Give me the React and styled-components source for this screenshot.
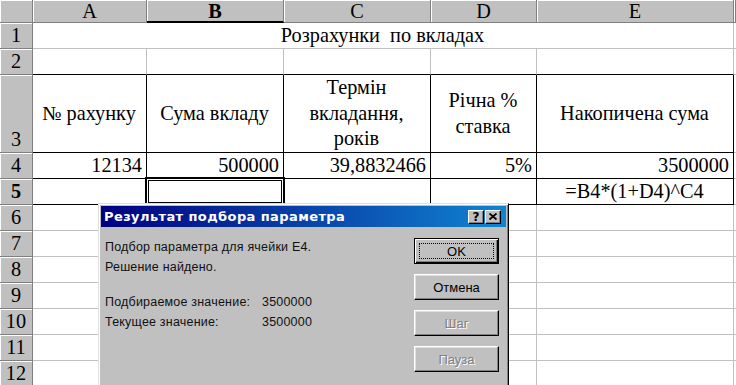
import styled, { createGlobalStyle, css } from "styled-components";

const GlobalStyle = createGlobalStyle`
  html, body {
    margin: 0;
    padding: 0;
    background: #fff;
  }
  body {
    width: 736px;
    height: 385px;
    overflow: hidden;
  }
`;

const Screen = styled.div`
  position: relative;
  width: 736px;
  height: 385px;
  overflow: hidden;
`;

const Sheet = styled.div`
  display: grid;
  grid-template-columns: 33px 114px 137px 147px 106px 197px 2px;
  grid-template-rows: 23px 26px 26px 78px 26px 26px repeat(7, 26px);
  font-family: "Liberation Serif", "Times New Roman", serif;
  font-size: 20.3px;
  color: #000;
`;

const headBase = css`
  box-sizing: border-box;
  background: #c0c0c0;
  display: flex;
  justify-content: center;
  box-shadow: inset 1px 1px 0 #fff;
`;

const Corner = styled.div`
  ${headBase};
  border-right: 1px solid #808080;
  border-bottom: 1px solid #808080;
`;

const ColHead = styled.div`
  ${headBase};
  align-items: center;
  border-right: 1px solid #808080;
  border-bottom: ${(p) => (p.$active ? "2px solid #000" : "1px solid #808080")};
  font-weight: ${(p) => (p.$active ? "bold" : "normal")};
  padding-top: 1px;
`;

const RowHead = styled.div`
  ${headBase};
  align-items: flex-end;
  line-height: 25px;
  border-right: 1px solid #808080;
  border-bottom: 1px solid #808080;
  font-weight: ${(p) => (p.$active ? "bold" : "normal")};
`;

const Cell = styled.div`
  position: relative;
  box-sizing: border-box;
  display: flex;
  align-items: center;
  justify-content: ${(p) =>
    p.$align === "right" ? "flex-end" : p.$align === "center" ? "center" : "flex-start"};
  text-align: center;
  padding: 0 4px 0 3px;
  line-height: 25.5px;
  white-space: pre;
  border-right: 1px solid ${(p) => p.$r || "#c0c0c0"};
  border-bottom: 1px solid ${(p) => p.$b || "#c0c0c0"};
  ${(p) => p.$span && css`grid-column: ${p.$span};`}
  ${(p) =>
    p.$selected &&
    css`
      &::after {
        content: "";
        position: absolute;
        left: -2px;
        top: -2px;
        right: -2px;
        bottom: -2px;
        border: 4px double #000;
      }
    `}
`;

const Dialog = styled.div`
  position: absolute;
  left: 98px;
  top: 203px;
  width: 411px;
  height: 200px;
  box-sizing: border-box;
  padding: 2px;
  background: #c0c0c0;
  border: 1px solid;
  border-color: #dfdfdf #000 #000 #dfdfdf;
  box-shadow: inset 1px 1px 0 #fff, inset -1px -1px 0 #808080;
  font-family: "Liberation Sans", Arial, sans-serif;
  font-size: 12.5px;
  color: #000;
`;

const TitleBar = styled.div`
  height: 21px;
  display: flex;
  align-items: center;
  justify-content: space-between;
  padding: 0 5px 0 3px;
  background: linear-gradient(to right, #000080, #1084d0);
`;

const TitleText = styled.div`
  font-family: "DejaVu Sans", Verdana, sans-serif;
  font-weight: bold;
  font-size: 13px;
  letter-spacing: 0.4px;
  color: #fff;
`;

const TitleButtons = styled.div`
  display: flex;
  gap: 1px;
`;

const TitleButton = styled.div`
  width: 16px;
  height: 14px;
  box-sizing: border-box;
  background: #c0c0c0;
  border: 1px solid;
  border-color: #fff #000 #000 #fff;
  box-shadow: inset -1px -1px 0 #808080;
  display: flex;
  align-items: center;
  justify-content: center;
  font-family: "DejaVu Sans", sans-serif;
  font-weight: bold;
  font-size: 12px;
  line-height: 1;
`;

const Body = styled.div`
  display: flex;
  justify-content: space-between;
  padding: 10px 7px 0 4px;
`;

const Info = styled.div`
  display: flex;
  flex-direction: column;
`;

const Line = styled.div`
  display: flex;
  height: 20px;
  line-height: 20px;
  letter-spacing: 0.2px;
  color: #111;
  margin-top: ${(p) => (p.$gap ? "15px" : "0")};
`;

const Label = styled.span`
  width: 157px;
`;

const Buttons = styled.div`
  display: flex;
  flex-direction: column;
  gap: 10px;
  padding-top: 1px;
`;

const Button = styled.div`
  position: relative;
  width: 85px;
  height: 26px;
  box-sizing: border-box;
  display: flex;
  align-items: center;
  justify-content: center;
  font-size: 13px;
  background: #c0c0c0;
  border: 1px solid;
  border-color: ${(p) => (p.$default ? "#000" : "#fff #000 #000 #fff")};
  box-shadow: ${(p) =>
    p.$default
      ? "inset 1px 1px 0 #fff, inset -1px -1px 0 #000, inset -2px -2px 0 #808080"
      : "inset -1px -1px 0 #808080, inset 1px 1px 0 #dfdfdf"};
  color: ${(p) => (p.$disabled ? "#808080" : "#000")};
  text-shadow: ${(p) => (p.$disabled ? "1px 1px 0 #fff" : "none")};
  ${(p) =>
    p.$default &&
    css`
      &::after {
        content: "";
        position: absolute;
        left: 4px;
        top: 4px;
        right: 4px;
        bottom: 4px;
        border: 1px dotted #000;
      }
    `}
`;

const cols = ["A", "B", "C", "D", "E"];
const B = "#000";

function CloseIcon() {
  return (
    <svg width="8" height="7" viewBox="0 0 8 7">
      <path d="M0.5 0.5 L7.5 6.5 M7.5 0.5 L0.5 6.5" stroke="#000" strokeWidth="1.8" />
    </svg>
  );
}

function EmptyRow({ n }) {
  return (
    <>
      <RowHead>{n}</RowHead>
      {cols.map((c) => (
        <Cell key={c} />
      ))}
      <Cell $r="transparent" />
    </>
  );
}

export default function App() {
  return (
    <Screen>
      <GlobalStyle />
      <Sheet>
        <Corner />
        {cols.map((c) => (
          <ColHead key={c} $active={c === "B"}>
            {c}
          </ColHead>
        ))}
        <ColHead />

        <RowHead>1</RowHead>
        <Cell $span="2 / 7" $align="center">Розрахунки  по вкладах</Cell>
        <Cell $r="transparent" />

        <RowHead>2</RowHead>
        {cols.map((c) => (
          <Cell key={c} $b={B} />
        ))}
        <Cell $r="transparent" />

        <RowHead>3</RowHead>
        <Cell $align="center" $r={B} $b={B}>№ рахунку</Cell>
        <Cell $align="center" $r={B} $b={B}>Сума вкладу</Cell>
        <Cell $align="center" $r={B} $b={B}>{"Термін\nвкладання,\nроків"}</Cell>
        <Cell $align="center" $r={B} $b={B}>{"Річна %\nставка"}</Cell>
        <Cell $align="center" $r={B} $b={B}>Накопичена сума</Cell>
        <Cell $r="transparent" />

        <RowHead>4</RowHead>
        <Cell $align="right" $r={B} $b={B}>12134</Cell>
        <Cell $align="right" $r={B} $b={B}>500000</Cell>
        <Cell $align="right" $r={B} $b={B}>39,8832466</Cell>
        <Cell $align="right" $r={B} $b={B}>5%</Cell>
        <Cell $align="right" $r={B} $b={B}>3500000</Cell>
        <Cell $r="transparent" />

        <RowHead $active>5</RowHead>
        <Cell $r={B} $b={B} />
        <Cell $r={B} $b={B} $selected />
        <Cell $r={B} $b={B} />
        <Cell $r={B} $b={B} />
        <Cell $align="center" $r={B} $b={B}>=B4*(1+D4)^C4</Cell>
        <Cell $r="transparent" />

        {[6, 7, 8, 9, 10, 11, 12].map((n) => (
          <EmptyRow key={n} n={n} />
        ))}
      </Sheet>

      <Dialog>
        <TitleBar>
          <TitleText>Результат подбора параметра</TitleText>
          <TitleButtons>
            <TitleButton>?</TitleButton>
            <TitleButton>
              <CloseIcon />
            </TitleButton>
          </TitleButtons>
        </TitleBar>
        <Body>
          <Info>
            <Line>Подбор параметра для ячейки E4.</Line>
            <Line>Решение найдено.</Line>
            <Line $gap>
              <Label>Подбираемое значение:</Label>
              <span>3500000</span>
            </Line>
            <Line>
              <Label>Текущее значение:</Label>
              <span>3500000</span>
            </Line>
          </Info>
          <Buttons>
            <Button $default>OK</Button>
            <Button>Отмена</Button>
            <Button $disabled>Шаг</Button>
            <Button $disabled>Пауза</Button>
          </Buttons>
        </Body>
      </Dialog>
    </Screen>
  );
}
